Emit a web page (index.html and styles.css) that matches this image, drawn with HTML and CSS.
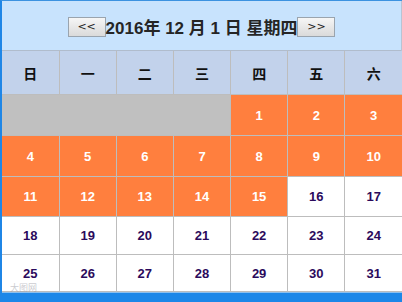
FILE: index.html
```html
<!DOCTYPE html>
<html>
<head>
<meta charset="utf-8">
<link rel="stylesheet" href="styles.css">
</head>
<body>
<div class="frame">
  <div class="cal">
    <div class="head">
      <button class="nav">&lt;&lt;</button><span class="title">2016年 12 月 1 日 星期四</span><button class="nav">&gt;&gt;</button>
    </div>
    <table class="grid">
      <tr class="wk"><th>日</th><th>一</th><th>二</th><th>三</th><th>四</th><th>五</th><th>六</th></tr>
      <tr class="r1"><td class="blank" colspan="4"></td><td class="on">1</td><td class="on">2</td><td class="on">3</td></tr>
      <tr class="r2"><td class="on">4</td><td class="on">5</td><td class="on">6</td><td class="on">7</td><td class="on">8</td><td class="on">9</td><td class="on">10</td></tr>
      <tr class="r3"><td class="on">11</td><td class="on">12</td><td class="on">13</td><td class="on">14</td><td class="on">15</td><td>16</td><td>17</td></tr>
      <tr class="r4"><td>18</td><td>19</td><td>20</td><td>21</td><td>22</td><td>23</td><td>24</td></tr>
      <tr class="r5"><td>25</td><td>26</td><td>27</td><td>28</td><td>29</td><td>30</td><td>31</td></tr>
    </table>
  </div>
  <div class="bar"><span class="mark">大图网</span></div>
</div>
</body>
</html>
```
FILE: styles.css
```css
html, body { margin: 0; padding: 0; background: #fff; }
.frame {
  width: 402px; height: 302px; box-sizing: border-box;
  border-left: 2px solid #1f86e6; border-top: 1px solid #3c92e0;
  display: flex; flex-direction: column; position: relative;
}
.cal { flex: 1; display: flex; flex-direction: column; border-right: 1px solid #b8c4d4; }
.head {
  height: 50px; background: #c8e3fd; display: flex; align-items: center; justify-content: center;
  border-bottom: 1px solid #b0bccc; padding-top: 2px; box-sizing: border-box;
}
.title {
  font-weight: bold; font-size: 17px; color: #252525;
  font-family: "Liberation Sans", "Noto Sans CJK SC", sans-serif;
}
.nav {
  width: 38px; height: 20px; margin: 0; padding: 0; box-sizing: border-box;
  border: 1px solid #9aa4ae; background: linear-gradient(#f6f6f6, #dadada);
  font-family: "DejaVu Sans", sans-serif; font-size: 11px; color: #222;
}
.grid { border-collapse: collapse; width: 400px; table-layout: fixed; }
.grid th, .grid td {
  border: 1px solid #bdbdbd; text-align: center; padding: 0;
  font-family: "Liberation Sans", "Noto Sans CJK SC", sans-serif; font-weight: bold; font-size: 13px;
}
.grid tr > :first-child { border-left: none; }
.grid tr > :last-child { border-right: none; }
.wk th { height: 43px; background: #c2d2eb; color: #111; font-size: 14px; font-family: "Noto Sans CJK SC", sans-serif; border-top: none; }
.grid td { color: #2b0a5c; background: #fff; }
.r1 td, .r2 td { height: 40px; }
.r3 td { height: 39px; }
.r4 td { height: 37px; }
.r5 td { height: 36px; }
.grid td.on { background: #ff7f3e; color: #fff; }
.grid td.blank { background: #c0c0c0; }
.bar { height: 10px; background: #1c87e8; border-top: 1px solid #8cc0ef; position: relative; }
.mark {
  position: absolute; left: 8px; top: -12px; font-size: 9px; color: rgba(150,150,160,0.5);
  font-family: "Noto Sans CJK SC", sans-serif;
}
```
